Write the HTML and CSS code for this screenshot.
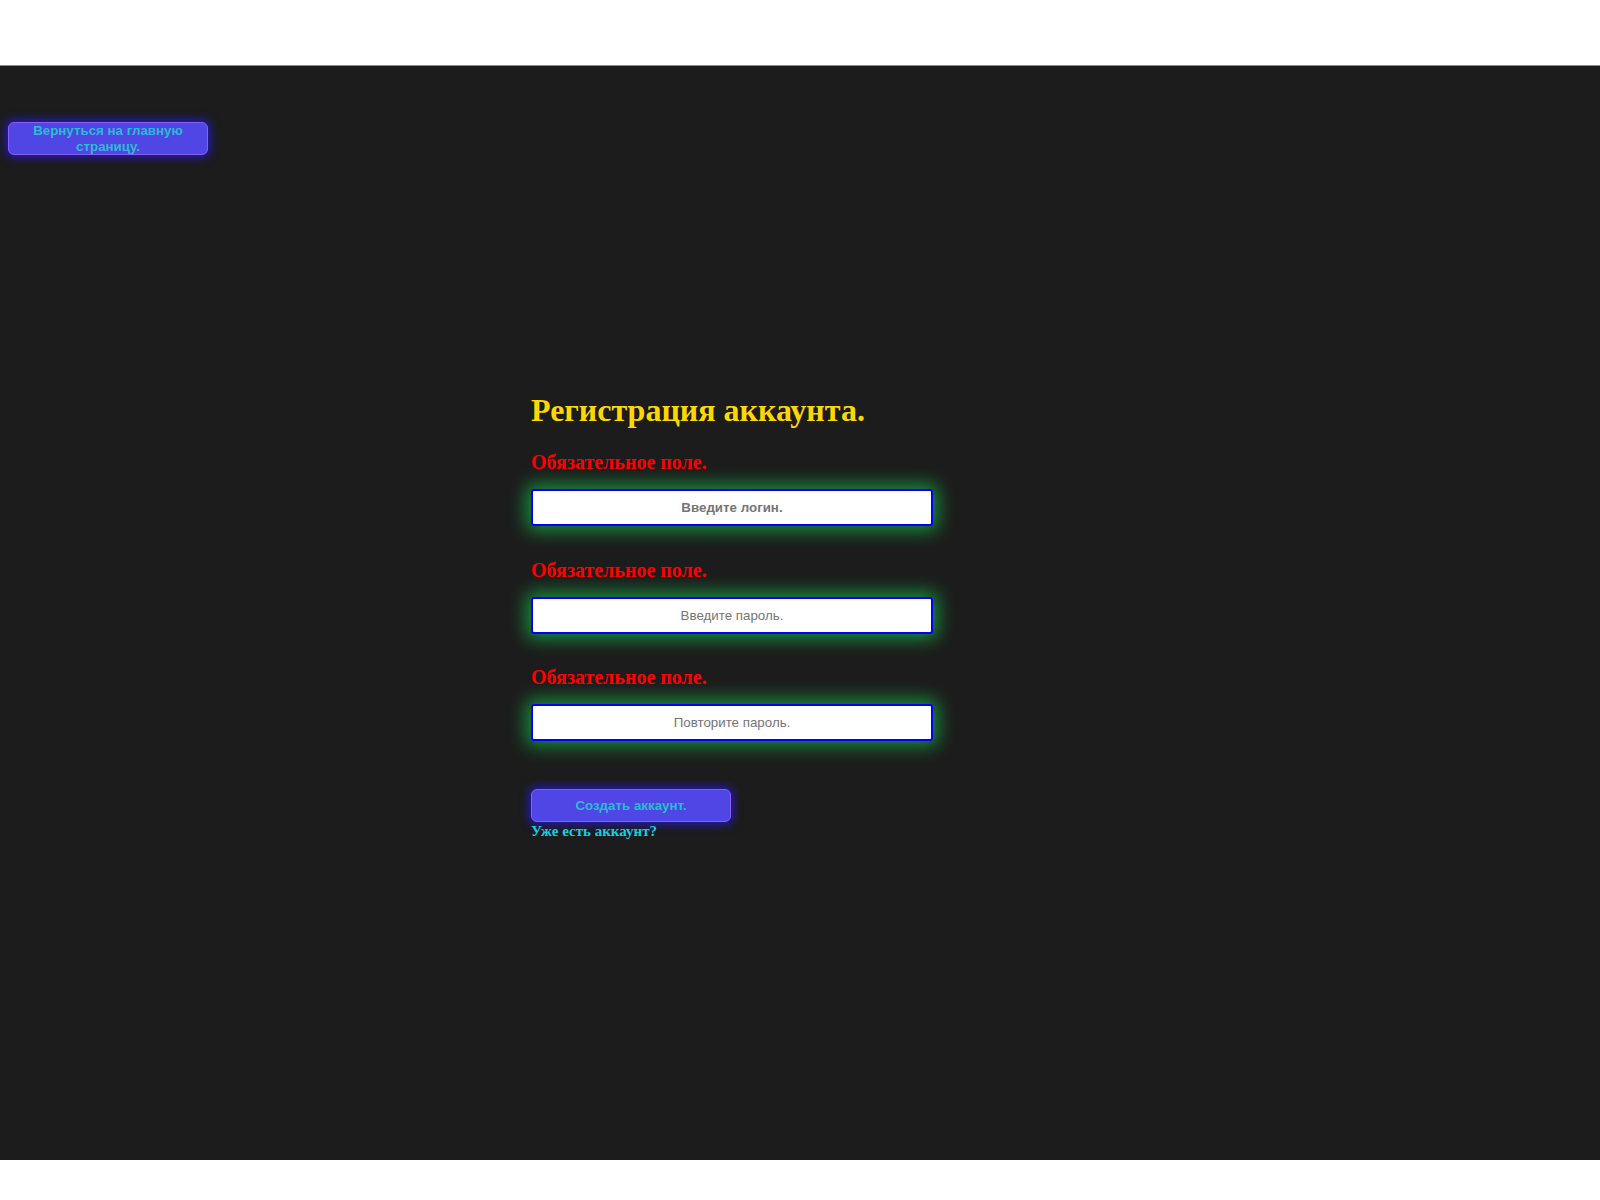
FILE: index.html
```html
<!DOCTYPE html>
<html lang="ru">
<head>
<meta charset="utf-8">
<title>Регистрация аккаунта</title>
<link rel="stylesheet" href="styles.css">
</head>
<body>
<div class="shell">
  <main class="page">
    <button class="back" type="button">Вернуться на главную страницу.</button>
    <form class="form">
      <h1 class="title">Регистрация аккаунта.</h1>
      <div class="field">
        <h3 class="req">Обязательное поле.</h3>
        <input class="inp inp-bold" type="text" placeholder="Введите логин.">
      </div>
      <div class="field">
        <h3 class="req">Обязательное поле.</h3>
        <input class="inp" type="password" placeholder="Введите пароль.">
      </div>
      <div class="field field-last">
        <h3 class="req">Обязательное поле.</h3>
        <input class="inp" type="password" placeholder="Повторите пароль.">
      </div>
      <button class="create" type="button">Создать аккаунт.</button>
      <a class="have" href="#">Уже есть аккаунт?</a>
    </form>
  </main>
</div>
</body>
</html>
```
FILE: styles.css
```css
html, body {
  margin: 0;
  padding: 0;
  background: #ffffff;
}
.shell {
  padding-top: 65px;
  height: 1200px;
  box-sizing: border-box;
}
.page {
  height: 1095px;
  box-sizing: border-box;
  background: #1c1c1c;
  border-top: 1px solid #8a8a8a;
  padding-top: 56px;
  display: flex;
  flex-direction: column;
  align-items: flex-start;
}
.back {
  margin-left: 8px;
  width: 200px;
  height: 33px;
  box-sizing: border-box;
  padding: 0 6px;
  border: 1px solid #8b5cf6;
  border-radius: 6px;
  background: #4f46e5;
  color: #2bbcd4;
  font: bold 13.33px/15.5px "Liberation Sans", Arial, sans-serif;
  box-shadow: 0 0 10px 2px #2418c8;
  cursor: pointer;
}
.form {
  margin: 237px 0 0 531px;
  display: flex;
  flex-direction: column;
  align-items: flex-start;
  width: 402px;
}
.title {
  margin: 0;
  font: bold 32px/36px "Liberation Serif", "Times New Roman", serif;
  color: #ffd700;
}
.field {
  display: flex;
  flex-direction: column;
  width: 100%;
  margin-top: 23px;
}
.field + .field {
  margin-top: 33px;
}
.field + .field-last {
  margin-top: 32px;
}
.req {
  margin: 0 0 16px 0;
  font: bold 20px/22px "Liberation Serif", "Times New Roman", serif;
  color: #ff0000;
}
.inp {
  width: 402px;
  height: 37px;
  box-sizing: border-box;
  border: 2px solid #0000ff;
  border-radius: 3px;
  background: #ffffff;
  text-align: center;
  font: 13.33px "Liberation Sans", Arial, sans-serif;
  color: #333;
  box-shadow: 0 0 18px 5px #168f3c;
  outline: none;
}
.inp::placeholder {
  color: #757575;
}
.inp-bold::placeholder {
  font-weight: bold;
}
.create {
  margin-top: 48px;
  width: 200px;
  height: 33px;
  box-sizing: border-box;
  border: 1px solid #8b5cf6;
  border-radius: 6px;
  background: #4f46e5;
  color: #2bbcd4;
  font: bold 13.33px "Liberation Sans", Arial, sans-serif;
  box-shadow: 0 0 10px 2px #2418c8;
  cursor: pointer;
}
.have {
  font: bold 15px/18px "Liberation Serif", "Times New Roman", serif;
  color: #10d0e0;
  text-decoration: none;
}
```
